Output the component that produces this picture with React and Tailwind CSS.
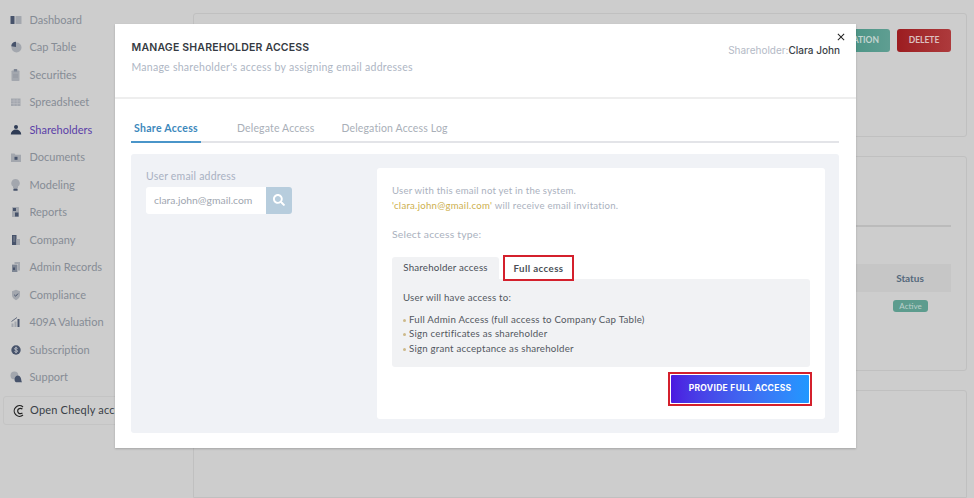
import { FaSearch } from "react-icons/fa";
import { MdClose } from "react-icons/md";

const sombre = "#47536b";
const clair = "#a3a7ae";

// icones duotone de la sidebar, dessinees a la main
const icones = {
  dashboard: (
    <>
      <rect x="0.5" y="2" width="4" height="8" rx="0.6" fill={sombre} />
      <rect x="5.5" y="2" width="6" height="8" rx="0.6" fill={clair} />
    </>
  ),
  cap: (
    <>
      <circle cx="6.5" cy="6.5" r="5" fill={clair} />
      <path d="M6 6V0.8A5 5 0 0 0 1.2 5.2Z" fill={sombre} />
    </>
  ),
  securities: (
    <>
      <rect x="1.5" y="1.5" width="8" height="10.5" rx="0.8" fill={clair} />
      <rect x="3.8" y="0" width="3.4" height="2.4" rx="0.5" fill="#7d8593" />
      <path d="M3 6h5M3 8h5" stroke="#8e939b" strokeWidth="0.7" />
    </>
  ),
  sheet: (
    <>
      <rect x="1" y="2.5" width="9.5" height="7.5" fill={clair} />
      <path d="M4 2.5v7.5M7.2 2.5v7.5M1 5h9.5M1 7.5h9.5" stroke="#bcbec2" strokeWidth="0.6" />
    </>
  ),
  person: (
    <>
      <circle cx="6" cy="3" r="2" fill="#2f3c55" />
      <path d="M0.8 10.5A5.2 5 0 0 1 11.2 10.5Z" fill="#2f3c55" />
    </>
  ),
  folder: (
    <>
      <path d="M1 2.5h3.5l1 1.2H11V11H1Z" fill={clair} />
      <rect x="4.5" y="5.8" width="3" height="3" fill={sombre} />
    </>
  ),
  bulb: (
    <>
      <path d="M5.5 0A4.2 4.2 0 0 0 3 7.6V9h5V7.6A4.2 4.2 0 0 0 5.5 0Z" fill={clair} />
      <rect x="3.4" y="9.6" width="4.2" height="2.2" rx="0.5" fill={sombre} />
    </>
  ),
  reports: (
    <>
      <rect x="2" y="1" width="7" height="10" rx="0.6" fill={clair} />
      <path d="M3 2h3v3H3ZM5 6.5h3.5v4H5Z" fill={sombre} />
    </>
  ),
  company: (
    <>
      <rect x="2" y="1" width="4.5" height="10" fill={sombre} />
      <rect x="6.5" y="5" width="3.5" height="6" fill={clair} />
      <path d="M3.2 3h2M3.2 5h2M3.2 7h2" stroke={clair} strokeWidth="0.7" />
    </>
  ),
  admin: (
    <>
      <path d="M4.5 1H10v8.5H8V3H4.5Z" fill={clair} />
      <rect x="2" y="3.6" width="5.4" height="7.4" fill="#7d8593" />
      <rect x="3" y="6.5" width="2" height="2.5" fill={sombre} />
    </>
  ),
  shield: (
    <>
      <path d="M6 0.8L10 2.2V6C10 8.6 8 10.2 6 11.2C4 10.2 2 8.6 2 6V2.2Z" fill={clair} />
      <path d="M4.2 5.8L5.6 7.2L8 4.6" fill="none" stroke={sombre} strokeWidth="1" />
    </>
  ),
  bars: (
    <>
      <path d="M1.5 7.5h2V11h-2ZM4.5 5.5h2V11h-2Z" fill={clair} />
      <path d="M7.5 3h2v8h-2Z" fill={sombre} />
      <path d="M1.5 5.5L7 1.5" stroke={sombre} strokeWidth="0.8" />
    </>
  ),
  dollar: (
    <>
      <circle cx="6" cy="6" r="4.7" fill={sombre} />
      <path d="M7.6 4.5C7.2 3.6 4.6 3.4 4.5 4.8C4.4 6.2 7.7 5.7 7.6 7.2C7.5 8.6 4.9 8.4 4.4 7.4M6 2.8v6.4" fill="none" stroke="#c9ccd2" strokeWidth="0.8" />
    </>
  ),
  support: (
    <>
      <circle cx="4.4" cy="4.4" r="3.9" fill={clair} />
      <path d="M5 6.4A3 3 0 0 1 10.6 6.4C11.4 8 11.2 10 12 11.2H6C4.4 10.4 4.2 8 5 6.4Z" fill={sombre} />
    </>
  ),
};

const NavLinks = [
  { nom: "Dashboard", icon: "dashboard" },
  { nom: "Cap Table", icon: "cap" },
  { nom: "Securities", icon: "securities" },
  { nom: "Spreadsheet", icon: "sheet" },
  { nom: "Shareholders", icon: "person", actif: true },
  { nom: "Documents", icon: "folder" },
  { nom: "Modeling", icon: "bulb" },
  { nom: "Reports", icon: "reports" },
  { nom: "Company", icon: "company" },
  { nom: "Admin Records", icon: "admin" },
  { nom: "Compliance", icon: "shield" },
  { nom: "409A Valuation", icon: "bars" },
  { nom: "Subscription", icon: "dollar" },
  { nom: "Support", icon: "support" },
];

const droits = [
  "Full Admin Access (full access to Company Cap Table)",
  "Sign certificates as shareholder",
  "Sign grant acceptance as shareholder",
];

function Sidebar() {
  return (
    <div className="w-[193px] shrink-0 pt-[6px] pl-[3px]">
      {NavLinks.map((link) => (
        <div key={link.nom} className="flex items-center h-[27.5px] pl-[7px] gap-[7.5px] text-[11px]">
          <svg width="12" height="12" viewBox="0 0 12 12" className="shrink-0">{icones[link.icon]}</svg>
          <span className={link.actif ? "text-[#5b3fa8]" : "text-[#868c95]"}>{link.nom}</span>
        </div>
      ))}
      <div className="mt-[5px] w-[150px] h-[29px] flex items-center gap-[5px] pl-[9px] border border-[#c4c4c4] rounded-[3px] text-[11px] tracking-[0.2px] text-[#3a3f47]">
        <svg width="12" height="12" viewBox="0 0 12 12" fill="none" stroke="#222" strokeWidth="1.2" className="shrink-0">
          <path d="M10 2A5.3 5.3 0 1 0 10 10" />
          <path d="M9.4 4.2A2.7 2.7 0 1 0 9.4 7.8" />
        </svg>
        <span className="whitespace-nowrap">Open Cheqly account</span>
      </div>
    </div>
  );
}

function Background() {
  return (
    <div className="absolute inset-0 flex bg-[#cdcdcd] font-['Lato',sans-serif] overflow-hidden">
      <Sidebar />
      <div className="flex-1 pt-[13px] pr-[7px] flex flex-col">
        <div className="h-[124px] shrink-0 border border-[#c0c0c0] rounded-[3px] flex justify-end gap-[7px] pt-[15px] pr-[15px]">
          <div className="w-[60px] h-[23px] rounded-[3px] bg-gradient-to-r from-[#3f8f7f] to-[#5f9e92] text-[#c5d5d1] text-[8.5px] font-bold flex items-center justify-end pr-[11px]">ATION</div>
          <div className="w-[54px] h-[23px] rounded-[3px] bg-gradient-to-r from-[#9c1c20] to-[#ad3a3c] text-[#dcc0c0] text-[8.5px] font-bold flex items-center justify-center">DELETE</div>
        </div>
        <div className="mt-[19px] h-[215px] shrink-0 border border-[#c0c0c0] rounded-[3px] pr-[15px] pl-[15px] pt-[68px]">
          <div className="h-[2px] bg-[#bbbbbb]"></div>
          <div className="mt-[37px] h-[28px] bg-[#c6c6c6] flex items-center justify-end text-[10px] font-bold text-[#55697c]">
            <span className="w-[82px] text-center">Status</span>
          </div>
          <div className="flex justify-end mt-[8px] pr-[23px]">
            <span className="h-[12px] w-[35px] rounded-[3px] bg-[#5d9c8e] text-[#bcd0cb] text-[8px] flex items-center justify-center">Active</span>
          </div>
        </div>
        <div className="mt-[19px] flex-1 border border-[#c0c0c0] rounded-t-[3px]"></div>
      </div>
    </div>
  );
}

function Modal() {
  return (
    <div className="absolute left-[115px] top-[24px] w-[741px] h-[424px] bg-white shadow-[0_1px_2px_rgba(0,0,0,0.2)] font-['Lato',sans-serif] flex flex-col">
      <MdClose className="absolute right-[9px] top-[7px] text-[12px] text-[#222]" />
      <div className="h-[75px] shrink-0 border-b-2 border-[#eeeeee] flex justify-between pl-[16.5px] pr-[16px] pt-[16px]">
        <div>
          <div className="text-[10.5px] leading-[16px] font-semibold tracking-[0.2px] text-[#353a42] font-['Inter',sans-serif]">MANAGE SHAREHOLDER ACCESS</div>
          <div className="mt-[3px] text-[10.5px] leading-[16px] tracking-[0.27px] text-[#aeb6c4]">Manage shareholder's access by assigning email addresses</div>
        </div>
        <div className="text-[10px] mt-[2px] leading-[16px] font-['Inter',sans-serif] text-[#b4bac6]">
          Shareholder:<span className="font-medium text-[#3a3f47]">Clara John</span>
        </div>
      </div>

      <div className="ml-[16px] mr-[17px] mt-[18px] h-[26px] shrink-0 border-b-2 border-[#e3e4e8] flex text-[10.5px] tracking-[0.15px]">
        <div className="w-[70px] h-[26px] border-b-2 border-[#4a95c9] text-center font-bold tracking-[0.3px] text-[#3c88bc] pt-[4px]">Share Access</div>
        <div className="ml-[36px] text-[#a9afb8] pt-[4px]">Delegate Access</div>
        <div className="ml-[27px] text-[#a9afb8] pt-[4px]">Delegation Access Log</div>
      </div>

      <div className="ml-[16px] mr-[17px] mt-[11px] h-[279px] rounded-[3px] bg-[#f0f2f6] flex pl-[15px] pr-[14px] pt-[14px] pb-[14px]">
        <div className="w-[231px] shrink-0">
          <div className="pt-[1px] text-[10.5px] leading-[14px] tracking-[0.2px] text-[#a9b1c2]">User email address</div>
          <div className="mt-[4px] flex w-[146px] h-[27px]">
            <div className="flex-1 bg-white rounded-l-[3px] flex items-center pl-[8px] text-[10.4px] text-[#a0a6b0]">clara.john@gmail.com</div>
            <div className="w-[26px] bg-[#b7cddd] rounded-r-[3px] flex items-center justify-center text-white text-[12px] pb-[2px]"><FaSearch /></div>
          </div>
        </div>
        <div className="flex-1 bg-white rounded-[3px] pl-[15px] pr-[15px] pt-[16px]">
          <div className="text-[9.6px] leading-[14.5px] tracking-[0.2px] text-[#aab1be]">User with this email not yet in the system.</div>
          <div className="text-[9.6px] leading-[14.5px] tracking-[0.26px] text-[#aab1be]"><span className="text-[#cdaf4e]">'clara.john@gmail.com'</span> will receive email invitation.</div>
          <div className="mt-[13.5px] text-[10.4px] leading-[14px] tracking-[0.2px] text-[#aab1be]">Select access type:</div>
          <div className="mt-[16px] flex h-[22px] text-[9.7px] tracking-[0.2px]">
            <div className="w-[107px] rounded-t-[3px] bg-[#f1f2f4] flex items-center justify-center text-[#4a4f57]">Shareholder access</div>
            <div className="ml-[4px] w-[71px] h-[26px] -mt-[1.5px] border-2 border-[#d4202c] flex items-center justify-center font-bold tracking-[0.4px] text-[#4a4f57] relative z-10 bg-white">Full access</div>
          </div>
          <div className="h-[88px] rounded-b-[3px] rounded-tr-[3px] bg-[#f1f2f4] pl-[11px] pt-[11px] text-[9.7px] tracking-[0.22px] text-[#53585f]">
            <div className="leading-[14px]">User will have access to:</div>
            <div className="mt-[8px]">
              {droits.map((d) => (
                <div key={d} className="flex items-center leading-[14.6px]">
                  <span className="w-[3px] h-[3px] rounded-full bg-[#cdb98a] mr-[3px] mt-[3px]"></span>{d}
                </div>
              ))}
            </div>
          </div>
          <div className="mt-[5px] flex justify-end">
            <div className="w-[144px] h-[34.5px] -mr-[2px] border-2 border-[#d4202c] p-[1px] bg-white">
              <div className="w-full h-full rounded-[1px] bg-gradient-to-r from-[#4b18e0] to-[#1f98ff] flex items-center justify-center text-white text-[8.5px] font-bold tracking-[0.3px] font-['Inter',sans-serif]">PROVIDE FULL ACCESS</div>
            </div>
          </div>
        </div>
      </div>
    </div>
  );
}

export default function App() {
  return (
    <div className="relative w-[974px] h-[498px] overflow-hidden">
      <Background />
      <Modal />
    </div>
  );
}
